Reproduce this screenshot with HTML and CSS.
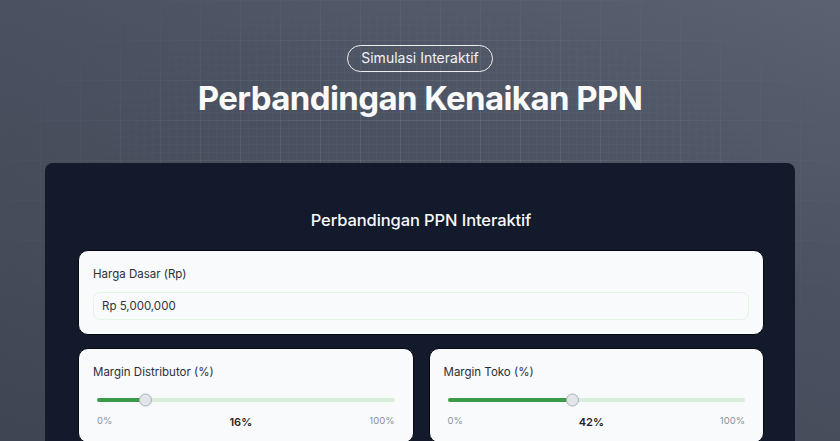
FILE: index.html
```html
<!DOCTYPE html>
<html lang="id">
<head>
<meta charset="utf-8">
<title>Perbandingan Kenaikan PPN</title>
<link rel="stylesheet" href="styles.css">
</head>
<body>
<div class="page">
  <header class="hero">
    <span class="badge">Simulasi Interaktif</span>
    <h1 class="title">Perbandingan Kenaikan PPN</h1>
  </header>
  <main class="panel">
    <h2 class="panel-title">Perbandingan PPN Interaktif</h2>
    <section class="card card-input">
      <label class="field-label">Harga Dasar (Rp)</label>
      <div class="input">Rp 5,000,000</div>
    </section>
    <div class="grid">
      <section class="card">
        <div class="field-label">Margin Distributor (%)</div>
        <div class="slider">
          <div class="track"><div class="fill" style="width:16%"></div><div class="thumb" style="left:16%"></div></div>
        </div>
        <div class="scale"><span>0%</span><strong>16%</strong><span>100%</span></div>
      </section>
      <section class="card">
        <div class="field-label">Margin Toko (%)</div>
        <div class="slider">
          <div class="track"><div class="fill" style="width:42%"></div><div class="thumb" style="left:42%"></div></div>
        </div>
        <div class="scale"><span>0%</span><strong>42%</strong><span>100%</span></div>
      </section>
    </div>
  </main>
</div>
</body>
</html>
```
FILE: styles.css
```css
* { box-sizing: border-box; }
html, body { margin: 0; height: 100%; }
body {
  font-family: Inter, "Noto Sans", "Liberation Sans", sans-serif;
  background: linear-gradient(200deg, #5a6272 0%, #4a5160 40%, #3f4653 100%);
  overflow: hidden;
  position: relative;
}
body::before {
  content: "";
  position: absolute;
  inset: 0;
  background-image:
    linear-gradient(rgba(255,255,255,0.06) 1px, transparent 1px),
    linear-gradient(90deg, rgba(255,255,255,0.06) 1px, transparent 1px),
    linear-gradient(rgba(255,255,255,0.03) 1px, transparent 1px),
    linear-gradient(90deg, rgba(255,255,255,0.03) 1px, transparent 1px);
  background-size: 40px 40px, 40px 40px, 8px 8px, 8px 8px;
  -webkit-mask-image: radial-gradient(ellipse 55% 60% at 50% 45%, #000 30%, transparent 100%);
  mask-image: radial-gradient(ellipse 55% 60% at 50% 45%, #000 30%, transparent 100%);
  pointer-events: none;
}
.page { position: relative; }
.hero {
  display: flex;
  flex-direction: column;
  align-items: center;
  padding-top: 45px;
  height: 163px;
}
.badge {
  display: inline-block;
  height: 27px;
  line-height: 24px;
  padding: 0 13px;
  border: 1.5px solid rgba(255,255,255,0.9);
  border-radius: 999px;
  color: #f1f3f6;
  font-size: 14px;
  font-weight: 400;
}
.title {
  margin: 4px 0 0;
  color: #fafafa;
  font-size: 33px;
  font-weight: 700;
  letter-spacing: -0.6px;
  line-height: 44px;
}
.panel {
  margin: 0 45px;
  background: #131a2b;
  border-radius: 8px;
  padding: 45px 31px 40px 33px;
  min-height: 300px;
}
.panel-title {
  margin: 0 0 18px;
  text-align: center;
  color: #f8fafc;
  font-size: 16.5px;
  font-weight: 500;
  line-height: 24px;
  letter-spacing: -0.1px;
}
.card {
  background: #f8fafc;
  border: 1px solid #05070c;
  border-radius: 10px;
  padding: 15px 14px 14px;
}
.card-input { padding: 15px 14px 14px; }
.field-label {
  display: block;
  color: #2b2f36;
  font-size: 11.5px;
  line-height: 16px;
}
.input {
  margin-top: 10px;
  height: 28px;
  border: 1px solid #e3f4e6;
  border-radius: 7px;
  padding: 0 8px;
  line-height: 26px;
  font-size: 11.5px;
  color: #30343b;
}
.grid {
  margin-top: 13px;
  display: grid;
  grid-template-columns: 1fr 1fr;
  gap: 15px;
}
.grid .card { padding-top: 15px; }
.slider {
  margin-top: 10px;
  height: 20px;
  padding: 0 4px;
  display: flex;
  align-items: center;
}
.track {
  position: relative;
  flex: 1;
  height: 4px;
  border-radius: 2px;
  background: #d8edda;
}
.fill {
  height: 100%;
  border-radius: 2px;
  background: #3b9b48;
}
.thumb {
  position: absolute;
  top: 50%;
  width: 13px;
  height: 13px;
  margin-left: -6px;
  transform: translateY(-50%);
  border-radius: 50%;
  background: #e2e5e9;
  border: 1px solid #a9b0ba;
}
.scale {
  margin-top: 4px;
  padding: 0 4px;
  display: flex;
  justify-content: space-between;
  align-items: center;
  line-height: 14px;
  font-size: 9.5px;
  color: #8b929c;
}
.scale strong {
  font-size: 11px;
  font-weight: 600;
  color: #1f2329;
  position: relative;
  top: 1px;
}
```
